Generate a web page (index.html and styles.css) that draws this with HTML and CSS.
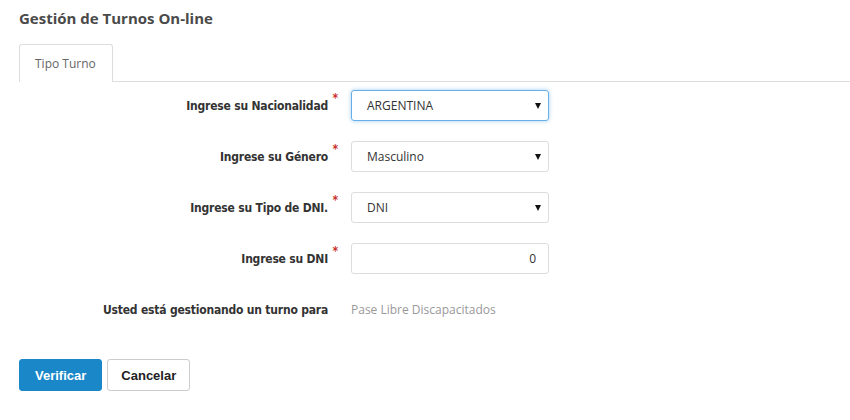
FILE: index.html
```html
<!DOCTYPE html>
<html lang="es">
<head>
  <meta charset="UTF-8">
  <title>Gestión de Turnos On-line</title>
  <link rel="stylesheet" href="styles.css">
</head>
<body>
  <div class="page">
    <h1 class="title">Gestión de Turnos On-line</h1>

    <ul class="tabs">
      <li class="tab active">Tipo Turno</li>
    </ul>

    <form class="form">
      <div class="row">
        <label class="label required">Ingrese su Nacionalidad</label>
        <div class="field focus">
          <span>ARGENTINA</span>
          <span class="caret"></span>
        </div>
      </div>
      <div class="row">
        <label class="label required">Ingrese su Género</label>
        <div class="field">
          <span>Masculino</span>
          <span class="caret"></span>
        </div>
      </div>
      <div class="row">
        <label class="label required">Ingrese su Tipo de DNI.</label>
        <div class="field">
          <span>DNI</span>
          <span class="caret"></span>
        </div>
      </div>
      <div class="row">
        <label class="label required">Ingrese su DNI</label>
        <div class="field number">
          <span>0</span>
        </div>
      </div>
      <div class="row info">
        <label class="label">Usted está gestionando un turno para</label>
        <div class="value">Pase Libre Discapacitados</div>
      </div>

      <div class="actions">
        <button type="button" class="btn btn-primary">Verificar</button>
        <button type="button" class="btn btn-default">Cancelar</button>
      </div>
    </form>
  </div>
</body>
</html>
```

FILE: styles.css
```css
body {
  margin: 0;
  background: #fff;
  font-family: "Open Sans", sans-serif;
  color: #444;
}

.page {
  padding: 8px 0 0 19px;
}

.title {
  margin: 0;
  font-size: 15px;
  font-weight: 700;
  color: #4a4a4a;
  line-height: 20px;
}

.tabs {
  list-style: none;
  margin: 16px 0 0;
  padding: 0;
  display: flex;
  border-bottom: 1px solid #ddd;
}

.tab {
  width: 62px;
  padding: 10px 15px;
  font-size: 12px;
  line-height: 17px;
  color: #666;
  border: 1px solid #ddd;
  border-bottom: none;
  border-radius: 3px 3px 0 0;
  background: #fff;
  margin-bottom: -1px;
}

.form {
  padding-top: 8px;
}

.row {
  display: flex;
  align-items: center;
  height: 31px;
  margin-bottom: 20px;
}

.label {
  width: 309px;
  margin-right: 23px;
  text-align: right;
  font-family: "DejaVu Sans", sans-serif;
  font-stretch: condensed;
  font-size: 12px;
  font-weight: 700;
  letter-spacing: -0.2px;
  color: #333;
  position: relative;
}

.required::after {
  content: "*";
  position: absolute;
  right: -10px;
  top: -8px;
  color: #c9302c;
  font-size: 12px;
}

.field {
  box-sizing: border-box;
  width: 198px;
  height: 31px;
  border: 1px solid #ddd;
  border-radius: 3px;
  display: flex;
  align-items: center;
  justify-content: space-between;
  padding: 0 7px 0 15px;
  font-size: 12px;
  color: #333;
}

.field.focus {
  border-color: #66afe9;
  box-shadow: 0 0 4px rgba(102, 175, 233, 0.6);
}

.field.number {
  justify-content: flex-end;
  padding-right: 12px;
}

.caret {
  width: 0;
  height: 0;
  border-left: 3px solid transparent;
  border-right: 3px solid transparent;
  border-top: 6px solid #111;
}

.info {
  margin-top: 6px;
}

.value {
  font-size: 12px;
  color: #999;
}

.actions {
  display: flex;
  gap: 5px;
  margin-top: 34px;
}

.btn {
  font-family: "Liberation Sans", Arial, sans-serif;
  font-size: 13px;
  font-weight: 700;
  height: 32px;
  border-radius: 3px;
  padding: 0 15px;
  cursor: pointer;
}

.btn-primary {
  background: #1a87c9;
  border: 1px solid #1a87c9;
  color: #fff;
}

.btn-default {
  background: #fff;
  border: 1px solid #ccc;
  color: #222;
  padding: 0 13px;
}
```
